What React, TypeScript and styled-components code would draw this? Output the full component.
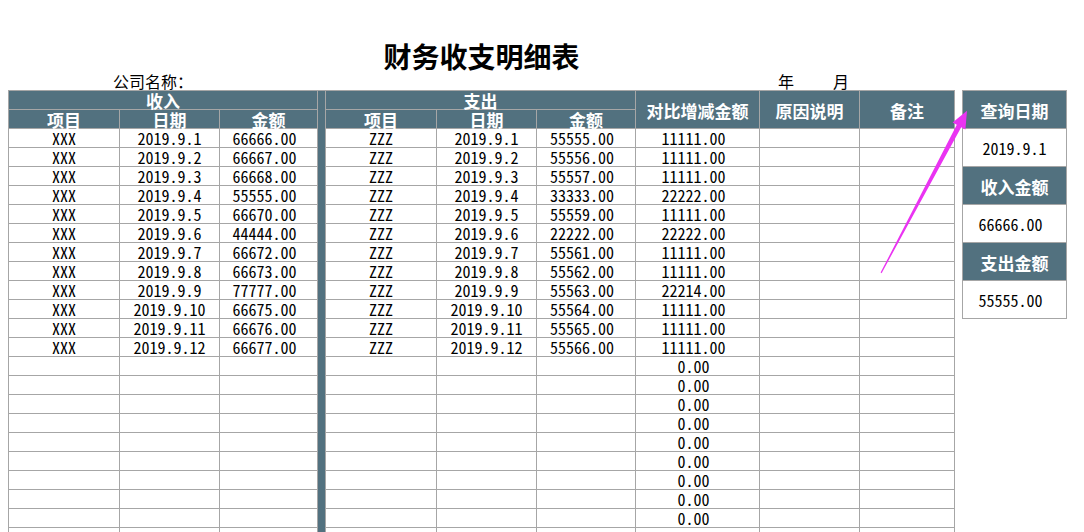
import React from "react";
import styled, { createGlobalStyle } from "styled-components";

const GlobalStyle = createGlobalStyle`
  html, body {
    margin: 0;
    padding: 0;
    background: #ffffff;
    overflow: hidden;
  }
  body {
    font-family: "Noto Sans CJK SC", "Noto Sans", sans-serif;
    color: #000;
  }
`;

const HEAD = "#52717f";
const LINE = "#a6a6a6";
const CJK = `"Noto Sans CJK SC", "Noto Sans", sans-serif`;
const MONO = `"Noto Sans Mono CJK SC", "DejaVu Sans Mono", monospace`;

const Page = styled.div`
  position: relative;
  width: 1084px;
  height: 532px;
  overflow: hidden;
  padding: 40px 0 0 8px;
  box-sizing: border-box;
`;

const Title = styled.h1`
  margin: 0;
  width: 947px;
  text-align: center;
  font-family: ${CJK};
  font-weight: 700;
  font-size: 28px;
  line-height: 32px;
`;

const InfoRow = styled.div`
  display: flex;
  height: 18px;
  font-family: ${CJK};
  font-size: 16px;
  line-height: 18px;
`;

const InfoLabel = styled.span<{ $offset: number }>`
  margin-left: ${(p) => p.$offset}px;
  white-space: nowrap;
`;

const Main = styled.div`
  display: flex;
  align-items: flex-start;
  gap: 7px;
`;

const Sheet = styled.div`
  display: grid;
  grid-template-columns: 110px 99px 97px 7px 110px 99px 98px 123px 99px 94px;
  grid-template-rows: repeat(25, 18px);
  gap: 1px;
  padding: 1px;
  background: ${LINE};
`;

const HeadCell = styled.div<{ $col: string; $row: string }>`
  grid-column: ${(p) => p.$col};
  grid-row: ${(p) => p.$row};
  background: ${HEAD};
  color: #ffffff;
  display: flex;
  align-items: center;
  justify-content: center;
  font-family: ${CJK};
  font-weight: 700;
  font-size: 17px;
  line-height: 17px;
  padding-top: 1px;
  white-space: nowrap;
`;

const Divider = styled.div`
  grid-column: 4;
  grid-row: 1 / -1;
  background: ${HEAD};
`;

const Cell = styled.div<{ $num?: boolean }>`
  background: #ffffff;
  display: flex;
  align-items: center;
  justify-content: center;
  font-family: ${MONO};
  font-size: 16px;
  line-height: 18px;
  padding-right: ${(p) => (p.$num ? 8 : 0)}px;
  white-space: nowrap;
`;

const Panel = styled.div`
  display: grid;
  grid-template-columns: 103px;
  grid-auto-rows: 37px;
  gap: 1px;
  padding: 1px;
  background: ${LINE};
`;

const PanelHead = styled.div`
  background: ${HEAD};
  color: #ffffff;
  display: flex;
  align-items: center;
  justify-content: center;
  font-family: ${CJK};
  font-weight: 700;
  font-size: 17px;
  padding-top: 2px;
  box-sizing: border-box;
`;

const PanelValue = styled.div<{ $num?: boolean }>`
  background: #ffffff;
  display: flex;
  align-items: center;
  justify-content: center;
  font-family: ${MONO};
  font-size: 16px;
  padding-right: ${(p) => (p.$num ? 8 : 0)}px;
`;

const Overlay = styled.svg`
  position: absolute;
  left: 0;
  top: 0;
  pointer-events: none;
`;

const income = [
  "66666.00", "66667.00", "66668.00", "55555.00", "66670.00", "44444.00",
  "66672.00", "66673.00", "77777.00", "66675.00", "66676.00", "66677.00",
];
const expense = [
  "55555.00", "55556.00", "55557.00", "33333.00", "55559.00", "22222.00",
  "55561.00", "55562.00", "55563.00", "55564.00", "55565.00", "55566.00",
];
const diff = [
  "11111.00", "11111.00", "11111.00", "22222.00", "11111.00", "22222.00",
  "11111.00", "11111.00", "22214.00", "11111.00", "11111.00", "11111.00",
];

export default function App() {
  const rows = income.map((amt, i) => ({
    date: `2019.9.${i + 1}`,
    income: amt,
    expense: expense[i],
    diff: diff[i],
  }));
  const blanks = Array.from({ length: 11 });

  return (
    <>
      <GlobalStyle />
      <Page>
        <Title>财务收支明细表</Title>
        <InfoRow>
          <InfoLabel $offset={105}>公司名称：</InfoLabel>
          <InfoLabel $offset={585}>年</InfoLabel>
          <InfoLabel $offset={39}>月</InfoLabel>
        </InfoRow>
        <Main>
          <Sheet>
            <HeadCell $col="1 / 4" $row="1">收入</HeadCell>
            <Divider />
            <HeadCell $col="5 / 8" $row="1">支出</HeadCell>
            <HeadCell $col="8" $row="1 / 3">对比增减金额</HeadCell>
            <HeadCell $col="9" $row="1 / 3">原因说明</HeadCell>
            <HeadCell $col="10" $row="1 / 3">备注</HeadCell>
            <HeadCell $col="1" $row="2">项目</HeadCell>
            <HeadCell $col="2" $row="2">日期</HeadCell>
            <HeadCell $col="3" $row="2">金额</HeadCell>
            <HeadCell $col="5" $row="2">项目</HeadCell>
            <HeadCell $col="6" $row="2">日期</HeadCell>
            <HeadCell $col="7" $row="2">金额</HeadCell>
            {rows.map((r) => (
              <React.Fragment key={r.date}>
                <Cell>XXX</Cell>
                <Cell>{r.date}</Cell>
                <Cell $num>{r.income}</Cell>
                <Cell>ZZZ</Cell>
                <Cell>{r.date}</Cell>
                <Cell $num>{r.expense}</Cell>
                <Cell $num>{r.diff}</Cell>
                <Cell />
                <Cell />
              </React.Fragment>
            ))}
            {blanks.map((_, i) => (
              <React.Fragment key={`b${i}`}>
                <Cell />
                <Cell />
                <Cell />
                <Cell />
                <Cell />
                <Cell />
                <Cell $num>0.00</Cell>
                <Cell />
                <Cell />
              </React.Fragment>
            ))}
          </Sheet>
          <Panel>
            <PanelHead>查询日期</PanelHead>
            <PanelValue>2019.9.1</PanelValue>
            <PanelHead>收入金额</PanelHead>
            <PanelValue $num>66666.00</PanelValue>
            <PanelHead>支出金额</PanelHead>
            <PanelValue $num>55555.00</PanelValue>
          </Panel>
        </Main>
        <Overlay width="1084" height="532" viewBox="0 0 1084 532">
          <polygon
            fill="#ea33f2"
            points="880.6,272.6 956.8,124.8 952.6,122.4 967,110.8 965.4,129.4 961.2,127.2 881.6,273.2"
          />
        </Overlay>
      </Page>
    </>
  );
}
